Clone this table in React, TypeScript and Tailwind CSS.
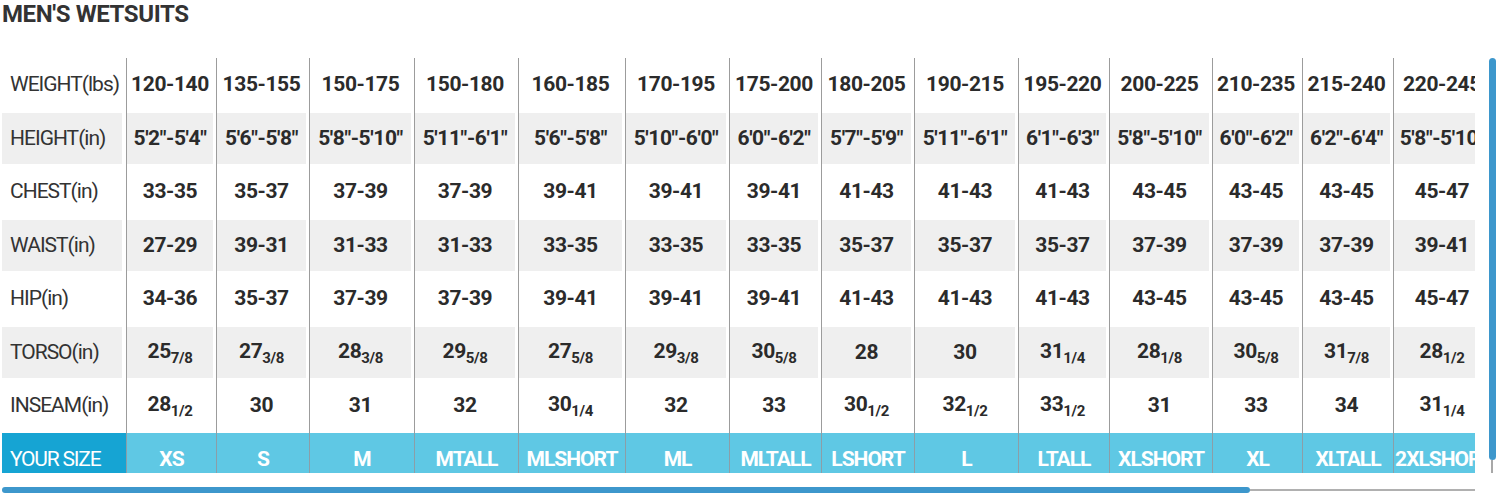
import React from "react";

type Val = string | [string, string];

const widths = [90, 93, 105, 104, 107, 104, 92, 93, 104, 91, 103, 90, 91, 100];

const rows: { label: string; shade: boolean; values: Val[] }[] = [
  {
    label: "WEIGHT(lbs)",
    shade: false,
    values: ["120-140", "135-155", "150-175", "150-180", "160-185", "170-195", "175-200", "180-205", "190-215", "195-220", "200-225", "210-235", "215-240", "220-245"],
  },
  {
    label: "HEIGHT(in)",
    shade: true,
    values: [`5'2"-5'4"`, `5'6"-5'8"`, `5'8"-5'10"`, `5'11"-6'1"`, `5'6"-5'8"`, `5'10"-6'0"`, `6'0"-6'2"`, `5'7"-5'9"`, `5'11"-6'1"`, `6'1"-6'3"`, `5'8"-5'10"`, `6'0"-6'2"`, `6'2"-6'4"`, `5'8"-5'10"`],
  },
  {
    label: "CHEST(in)",
    shade: false,
    values: ["33-35", "35-37", "37-39", "37-39", "39-41", "39-41", "39-41", "41-43", "41-43", "41-43", "43-45", "43-45", "43-45", "45-47"],
  },
  {
    label: "WAIST(in)",
    shade: true,
    values: ["27-29", "39-31", "31-33", "31-33", "33-35", "33-35", "33-35", "35-37", "35-37", "35-37", "37-39", "37-39", "37-39", "39-41"],
  },
  {
    label: "HIP(in)",
    shade: false,
    values: ["34-36", "35-37", "37-39", "37-39", "39-41", "39-41", "39-41", "41-43", "41-43", "41-43", "43-45", "43-45", "43-45", "45-47"],
  },
  {
    label: "TORSO(in)",
    shade: true,
    values: [["25", "7/8"], ["27", "3/8"], ["28", "3/8"], ["29", "5/8"], ["27", "5/8"], ["29", "3/8"], ["30", "5/8"], "28", "30", ["31", "1/4"], ["28", "1/8"], ["30", "5/8"], ["31", "7/8"], ["28", "1/2"]],
  },
  {
    label: "INSEAM(in)",
    shade: false,
    values: [["28", "1/2"], "30", "31", "32", ["30", "1/4"], "32", "33", ["30", "1/2"], ["32", "1/2"], ["33", "1/2"], "31", "33", "34", ["31", "1/4"]],
  },
];

const sizes = ["XS", "S", "M", "MTALL", "MLSHORT", "ML", "MLTALL", "LSHORT", "L", "LTALL", "XLSHORT", "XL", "XLTALL", "2XLSHORT"];

const Value = ({ v }: { v: Val }) =>
  typeof v === "string" ? (
    <span>{v}</span>
  ) : (
    <span>
      {v[0]}
      <span className="text-[15px] align-[-5px]">{v[1]}</span>
    </span>
  );

export default function App() {
  return (
    <div className="w-[1500px] h-[497px] bg-white pl-[2px] font-[Roboto,sans-serif] text-[#2b2b2b] overflow-hidden">
      <div className="h-[58px] text-[24px] leading-[28px] font-bold tracking-[-0.4px] text-[#333]">
        MEN'S WETSUITS
      </div>

      <div className="flex">
        <div className="w-[1473px] h-[415px] overflow-hidden">
          {rows.map((row) => (
            <div key={row.label} className="flex h-[53.5px] whitespace-nowrap">
              <div className="w-[124px] shrink-0 flex pt-[1px] pb-[1px]">
                <div
                  className={`flex-1 mr-[4px] flex items-center pl-[8px] text-[21px] tracking-[-1px] text-[#333] ${row.shade ? "bg-[#efefef]" : ""}`}
                >
                  {row.label}
                </div>
              </div>
              {row.values.map((v, i) => (
                <div
                  key={i}
                  style={{ width: widths[i] }}
                  className="shrink-0 flex border-l border-[#9c9c9c] pt-[1px] pb-[1px]"
                >
                  <div
                    className={`flex-1 mr-[3px] flex items-center justify-center text-[21px] font-bold tracking-[-0.4px] ${row.shade ? "bg-[#efefef]" : ""}`}
                  >
                    <Value v={v} />
                  </div>
                </div>
              ))}
            </div>
          ))}
          <div className="flex h-[53.5px] whitespace-nowrap text-white">
            <div className="w-[124px] shrink-0 flex items-center pl-[8px] bg-[#16a4d3] text-[21px] tracking-[-1.2px]">
              YOUR SIZE
            </div>
            {sizes.map((s, i) => (
              <div
                key={s}
                style={{ width: widths[i] }}
                className="shrink-0 flex items-center justify-center border-l border-[#8b9ea8] bg-[#5fc8e4] text-[21px] font-bold tracking-[-1px]"
              >
                {s}
              </div>
            ))}
          </div>
        </div>

        <div className="ml-[13px] w-[8px] flex flex-col items-center">
          <div className="w-[7px] h-[402px] rounded-full bg-[#3d97cc]" />
          <div className="w-[2px] h-[13px] bg-[#a8a8a8]" />
        </div>
      </div>

      <div className="mt-[14px] w-[1473px] flex items-center">
        <div className="w-[1248px] h-[6px] rounded-full bg-[#3d97cc]" />
        <div className="flex-1 h-[2px] bg-[#b0b0b0]" />
      </div>
    </div>
  );
}
